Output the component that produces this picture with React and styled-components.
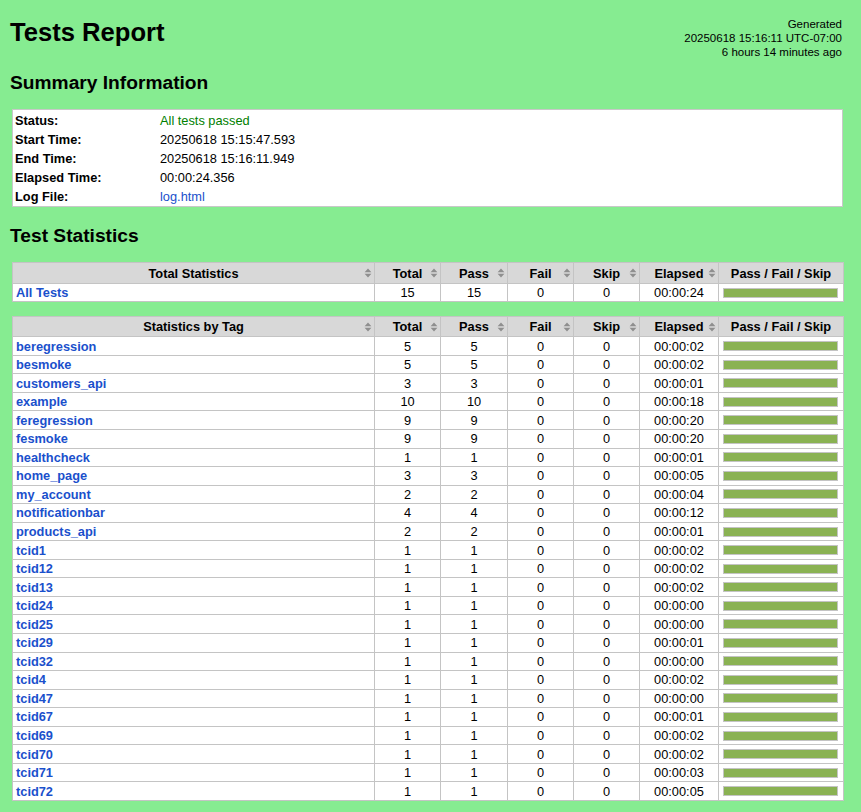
import React from 'react';
import styled, { createGlobalStyle } from 'styled-components';

const GlobalStyle = createGlobalStyle`
  html, body {
    margin: 0;
    padding: 0;
    background: #86ec91;
  }
  body {
    font-family: "Liberation Sans", Arial, sans-serif;
    font-size: 13px;
    color: #000;
  }
`;

const Page = styled.div`
  width: 861px;
  height: 812px;
  overflow: hidden;
  box-sizing: border-box;
  padding: 0 19px 0 10px;
`;

const Header = styled.header`
  display: flex;
  justify-content: space-between;
  align-items: flex-start;
  height: 71px;
`;

const Title = styled.h1`
  margin: 17px 0 0;
  font-size: 25.6px;
  line-height: 30px;
  font-weight: 700;
`;

const Generated = styled.div`
  padding-top: 17px;
  text-align: right;
  font-size: 11.5px;
  line-height: 14px;
`;

const SectionTitle = styled.h2`
  margin: 0;
  height: 38px;
  font-size: 19.2px;
  line-height: 23px;
  font-weight: 700;
`;

const Summary = styled.table`
  width: 831px;
  margin-left: 2px;
  border-collapse: separate;
  border-spacing: 0;
  background: #fff;
  border: 1px solid #c8c8c8;
  table-layout: fixed;
  margin-bottom: 17.5px;
`;

const SummaryHead = styled.th`
  box-sizing: border-box;
  width: 147px;
  height: 19.2px;
  padding: 1px 0 0 2px;
  text-align: left;
  font-size: 12.8px;
  font-weight: 700;
`;

const SummaryCell = styled.td`
  box-sizing: border-box;
  height: 19.2px;
  padding: 1px 0 0;
  font-size: 12.8px;
  color: ${p => (p.$pass ? '#008000' : '#000')};
`;

const SummaryLink = styled.a`
  color: #1a50cc;
  text-decoration: none;
`;

const StatTable = styled.table`
  width: 831px;
  margin: 0 0 13.3px 2px;
  border-collapse: collapse;
  table-layout: fixed;
  background: #fff;
`;

const HeadCell = styled.th`
  position: relative;
  height: 19.5px;
  padding: 0;
  background: #d8d8d8;
  border: 1px solid #c4c4c4;
  font-size: 12.8px;
  font-weight: 700;
  text-align: center;
`;

const SortIcon = styled.svg`
  position: absolute;
  right: 2px;
  top: 5px;
  width: 8px;
  height: 10px;
`;

const Row = styled.tr`
  height: ${p => p.$height}px;
`;

const NameCell = styled.td`
  padding: 0 0 0 3px;
  border: 1px solid #c4c4c4;
  font-size: 12.8px;
  font-weight: 700;
  white-space: nowrap;
`;

const NameLink = styled.a`
  color: #1a50cc;
  text-decoration: none;
`;

const Cell = styled.td`
  padding: 0;
  border: 1px solid #c4c4c4;
  font-size: 12.8px;
  text-align: center;
`;

const GraphCell = styled.td`
  padding: 0 5px 0 4px;
  border: 1px solid #c4c4c4;
`;

const Graph = styled.div`
  height: 8px;
  background: #8ab253;
  border: 1px solid #c4c4c4;
`;

const columns = [362, 66, 67, 66, 66, 79, 125];
const colLabels = ['Total', 'Pass', 'Fail', 'Skip', 'Elapsed'];

const tagRows = [
  ['beregression', 5, 5, '00:00:02'],
  ['besmoke', 5, 5, '00:00:02'],
  ['customers_api', 3, 3, '00:00:01'],
  ['example', 10, 10, '00:00:18'],
  ['feregression', 9, 9, '00:00:20'],
  ['fesmoke', 9, 9, '00:00:20'],
  ['healthcheck', 1, 1, '00:00:01'],
  ['home_page', 3, 3, '00:00:05'],
  ['my_account', 2, 2, '00:00:04'],
  ['notificationbar', 4, 4, '00:00:12'],
  ['products_api', 2, 2, '00:00:01'],
  ['tcid1', 1, 1, '00:00:02'],
  ['tcid12', 1, 1, '00:00:02'],
  ['tcid13', 1, 1, '00:00:02'],
  ['tcid24', 1, 1, '00:00:00'],
  ['tcid25', 1, 1, '00:00:00'],
  ['tcid29', 1, 1, '00:00:01'],
  ['tcid32', 1, 1, '00:00:00'],
  ['tcid4', 1, 1, '00:00:02'],
  ['tcid47', 1, 1, '00:00:00'],
  ['tcid67', 1, 1, '00:00:01'],
  ['tcid69', 1, 1, '00:00:02'],
  ['tcid70', 1, 1, '00:00:02'],
  ['tcid71', 1, 1, '00:00:03'],
  ['tcid72', 1, 1, '00:00:05'],
];

const summaryRows = [
  ['Status:', 'All tests passed'],
  ['Start Time:', '20250618 15:15:47.593'],
  ['End Time:', '20250618 15:16:11.949'],
  ['Elapsed Time:', '00:00:24.356'],
];

const Sort = () => (
  <SortIcon viewBox="0 0 8 10">
    <path d="M4 0.6 L7.4 4.2 L0.6 4.2 Z M4 9.4 L0.6 5.8 L7.4 5.8 Z" fill="#8f8f8f" />
  </SortIcon>
);

const Stats = ({ title, rows }) => (
  <StatTable>
    <colgroup>
      {columns.map((w, i) => (
        <col key={i} style={{ width: w }} />
      ))}
    </colgroup>
    <thead>
      <tr>
        <HeadCell>
          {title}
          <Sort />
        </HeadCell>
        {colLabels.map(label => (
          <HeadCell key={label}>
            {label}
            <Sort />
          </HeadCell>
        ))}
        <HeadCell>Pass / Fail / Skip</HeadCell>
      </tr>
    </thead>
    <tbody>
      {rows.map(([name, total, pass, elapsed]) => (
        <Row key={name} $height={18.55}>
          <NameCell>
            <NameLink href="#">{name}</NameLink>
          </NameCell>
          <Cell>{total}</Cell>
          <Cell>{pass}</Cell>
          <Cell>0</Cell>
          <Cell>0</Cell>
          <Cell>{elapsed}</Cell>
          <GraphCell>
            <Graph />
          </GraphCell>
        </Row>
      ))}
    </tbody>
  </StatTable>
);

export default function App() {
  return (
    <Page>
      <GlobalStyle />
      <Header>
        <Title>Tests Report</Title>
        <Generated>
          Generated
          <br />
          20250618 15:16:11 UTC-07:00
          <br />
          6 hours 14 minutes ago
        </Generated>
      </Header>
      <SectionTitle>Summary Information</SectionTitle>
      <Summary>
        <tbody>
          {summaryRows.map(([label, value], i) => (
            <tr key={label}>
              <SummaryHead>{label}</SummaryHead>
              <SummaryCell $pass={i === 0}>{value}</SummaryCell>
            </tr>
          ))}
          <tr>
            <SummaryHead>Log File:</SummaryHead>
            <SummaryCell>
              <SummaryLink href="#">log.html</SummaryLink>
            </SummaryCell>
          </tr>
        </tbody>
      </Summary>
      <SectionTitle>Test Statistics</SectionTitle>
      <Stats title="Total Statistics" rows={[['All Tests', 15, 15, '00:00:24']]} />
      <Stats title="Statistics by Tag" rows={tagRows} />
    </Page>
  );
}
